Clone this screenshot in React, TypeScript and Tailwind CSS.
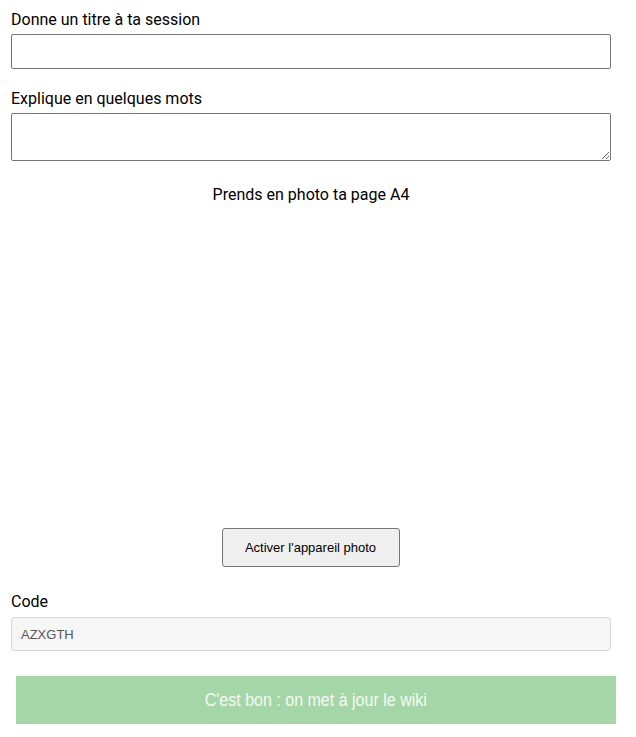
import { useState } from 'react';

export default function App() {
  const [title, setTitle] = useState('');
  const [desc, setDesc] = useState('');

  return (
    <div className="w-[636px] min-h-[737px] bg-white font-['Roboto',sans-serif] text-[16px] text-black">
      <div className="px-[11px] pt-[10px] w-[622px]">
        {/* Titre */}
        <label className="block leading-[19px]">Donne un titre à ta session</label>
        <input
          type="text"
          value={title}
          onChange={(e) => setTitle(e.target.value)}
          className="block mt-[5px] w-[600px] h-[35px] border border-[#767676] rounded-[2px] px-2 outline-none"
        />

        {/* Description */}
        <label className="block mt-[20px] leading-[19px]">Explique en quelques mots</label>
        <textarea
          value={desc}
          onChange={(e) => setDesc(e.target.value)}
          className="block mt-[5px] w-[600px] h-[48px] border border-[#767676] rounded-[2px] px-2 outline-none resize-y"
        />

        {/* Photo */}
        <p className="mt-[24px] w-[600px] text-center leading-[19px]">Prends en photo ta page A4</p>
        <div className="w-[600px] h-[324px]" />
        <div className="w-[600px] flex justify-center">
          <button className="ml-[-1px] w-[178px] h-[39px] bg-[#efefef] border border-[#767676] rounded-[3px] font-['Liberation_Sans',Arial,sans-serif] text-[13px] text-black">
            Activer l'appareil photo
          </button>
        </div>

        {/* Code */}
        <label className="block mt-[25px] leading-[19px]">Code</label>
        <input
          type="text"
          readOnly
          value="AZXGTH"
          className="block mt-[6px] w-[600px] h-[34px] bg-[#f6f6f6] border border-[#d8d8d8] rounded-[3px] px-[9px] font-['Liberation_Sans',Arial,sans-serif] text-[13px] text-[#555] outline-none"
        />
      </div>

      <div className="pl-[16px] pt-[25px] pb-[14px]">
        <button className="w-[600px] h-[48px] bg-[#a5d6a7] text-[#f4faf4] text-[18px] font-['Liberation_Sans',Arial,sans-serif]">
          <span className="inline-block scale-x-[0.89]">C'est bon : on met à jour le wiki</span>
        </button>
      </div>
    </div>
  );
}
